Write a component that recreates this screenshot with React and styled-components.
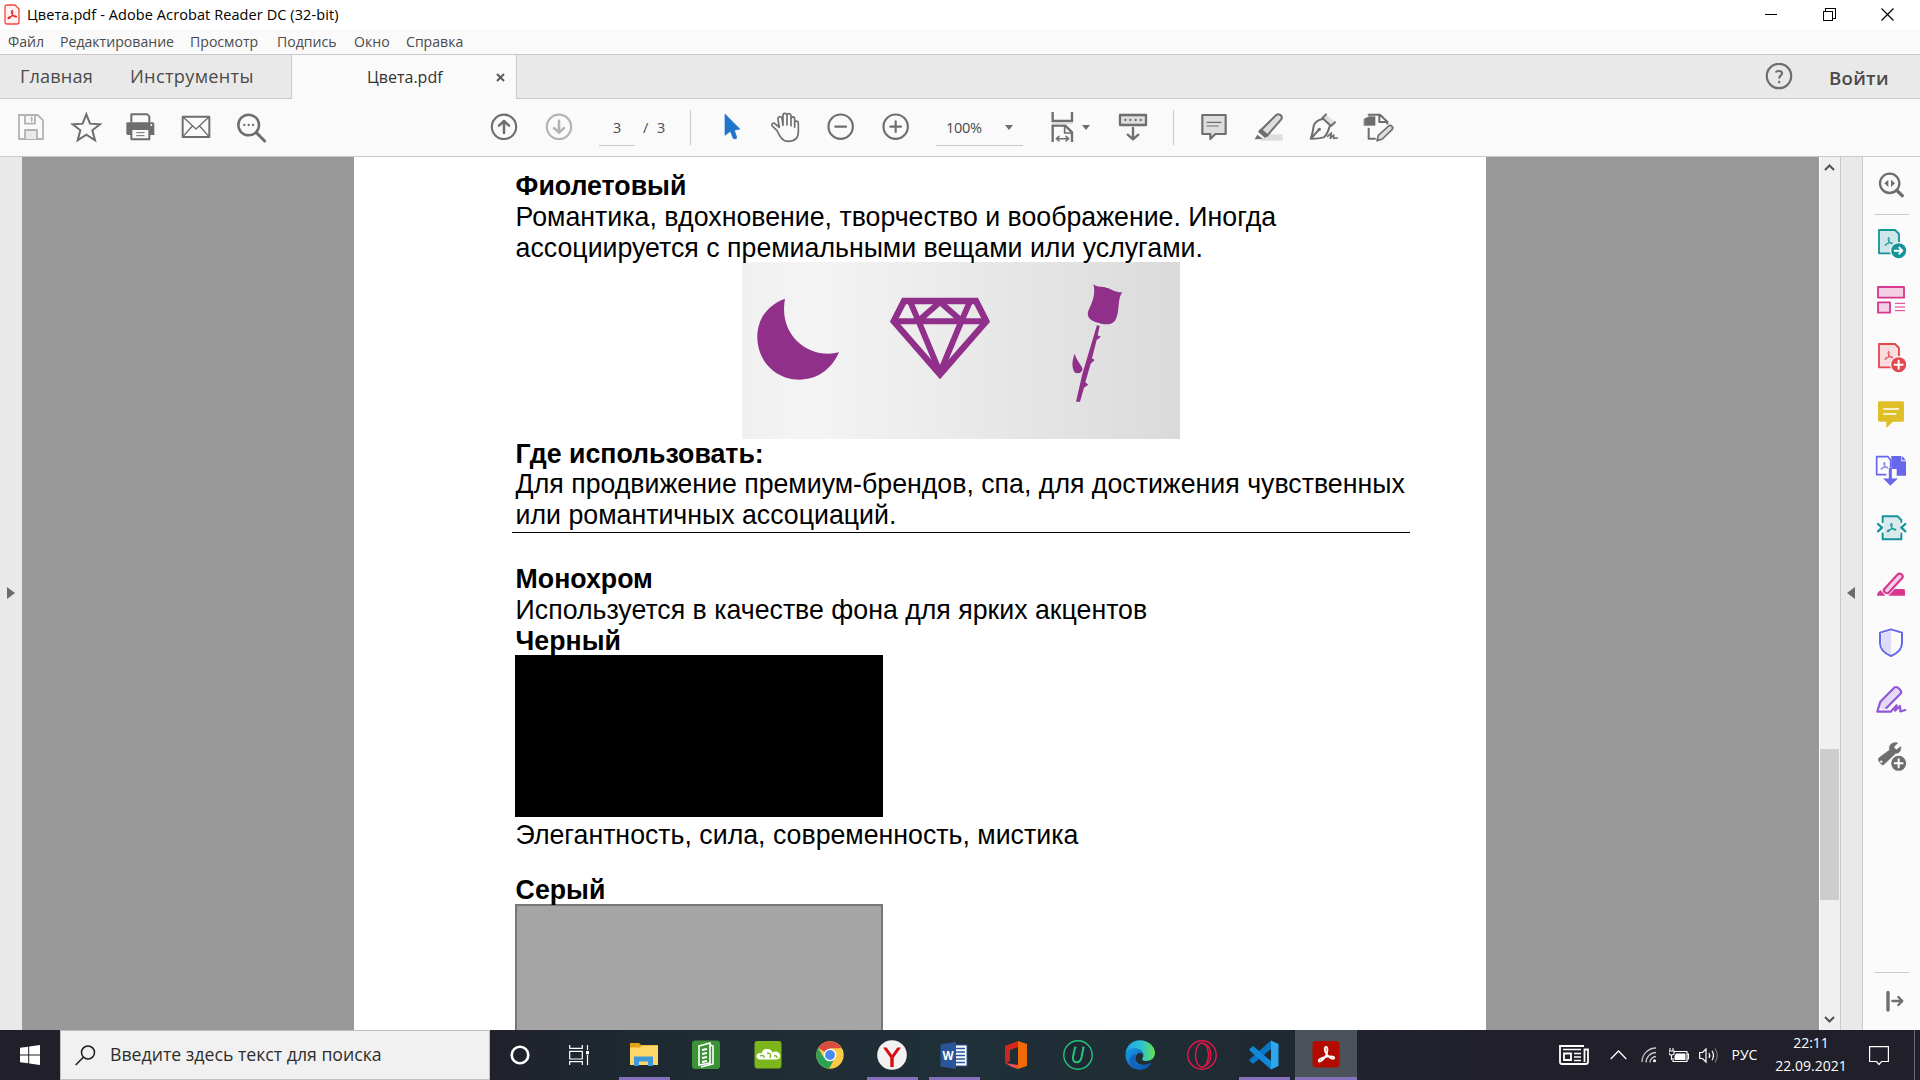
import React from "react";
import styled, { createGlobalStyle } from "styled-components";

const GlobalStyle = createGlobalStyle`
  * { box-sizing: border-box; }
  html, body { margin: 0; padding: 0; overflow: hidden; }
  body { font-family: "Open Sans", "Noto Sans", sans-serif; color: #4b4b4b; }
  svg { display: block; flex: none; }
`;

const Screen = styled.div`
  width: 1920px;
  height: 1080px;
  display: flex;
  flex-direction: column;
  background: #fafafa;
  overflow: hidden;
`;

const Label = styled.span`
  font-size: ${(p) => p.$size || 14}px;
  letter-spacing: ${(p) => p.$track || 0}px;
  font-weight: ${(p) => p.$weight || 400};
  color: ${(p) => p.$color || "#4b4b4b"};
  line-height: 1.2;
  white-space: nowrap;
`;

/* ---------- window frame ---------- */

const TitleBar = styled.header`
  height: 29px;
  flex: none;
  display: flex;
  align-items: center;
  background: #fff;
  padding: 0 4px;
`;

const TitleText = styled(Label)`
  margin-left: 7px;
  flex: 1;
`;

const WindowButton = styled.div`
  width: 58px;
  height: 29px;
  display: flex;
  align-items: center;
  justify-content: center;
`;

const MenuBar = styled.nav`
  height: 26px;
  flex: none;
  display: flex;
  align-items: center;
  padding: 1px 0 0 8px;
  background: #fafafa;
  border-bottom: 1px solid #c9c9c9;
`;

const MenuItem = styled(Label)`
  width: ${(p) => p.$w}px;
  font-size: 14.1px;
`;

const TabBar = styled.div`
  height: 44px;
  flex: none;
  display: flex;
  background: #e9e9e9;
`;

const TabArea = styled.div`
  display: flex;
  align-items: center;
  border-bottom: 1px solid #c9c9c9;
  padding-left: ${(p) => p.$pad || 0}px;
  width: ${(p) => (p.$w ? p.$w + "px" : "auto")};
  flex: ${(p) => (p.$w ? "none" : 1)};
  justify-content: ${(p) => (p.$end ? "flex-end" : "flex-start")};
`;

const NavTab = styled(Label)`
  width: ${(p) => p.$w}px;
`;

const ActiveTab = styled.div`
  width: 226px;
  display: flex;
  align-items: center;
  background: #fafafa;
  border-left: 1px solid #c9c9c9;
  border-right: 1px solid #c9c9c9;
  padding: 1px 0 0 75px;
`;

const TabName = styled(Label)`
  width: 129px;
`;

const SignIn = styled(Label)`
  width: 91px;
  margin-left: 36px;
  padding-top: 3px;
`;

/* ---------- toolbar ---------- */

const Toolbar = styled.div`
  height: 58px;
  flex: none;
  display: flex;
  align-items: center;
  background: #fafafa;
  border-bottom: 1px solid #c9c9c9;
  padding-left: 4px;
`;

const ToolGroup = styled.div`
  display: flex;
  margin-left: ${(p) => p.$gap || 0}px;
`;

const Tool = styled.div`
  width: 55px;
  display: flex;
  justify-content: center;
`;

const Field = styled.div`
  width: ${(p) => p.$w}px;
  height: 36px;
  margin-left: 12px;
  border-bottom: 1px solid #c9c9c9;
  display: flex;
  align-items: center;
  justify-content: space-between;
  padding: 1px ${(p) => p.$px}px 0;
`;

const PageTotal = styled(Label)`
  width: 55px;
  padding: 1px 0 0 8px;
  word-spacing: 5px;
`;

const ToolDivider = styled.div`
  width: 1px;
  height: 35px;
  background: #c9c9c9;
  margin-left: ${(p) => p.$gap || 0}px;
`;

const Caret = styled.div`
  border-left: 4px solid transparent;
  border-right: 4px solid transparent;
  border-top: 5px solid #6e6e6e;
  margin-left: ${(p) => p.$gap || 0}px;
`;

/* ---------- work area ---------- */

const WorkArea = styled.main`
  height: 873px;
  flex: none;
  display: flex;
`;

const SideHandle = styled.div`
  width: 22px;
  display: flex;
  align-items: center;
  padding: 0 0 2px ${(p) => p.$pad}px;
  background: #e9e9e9;
  border-left: ${(p) => (p.$edge ? "1px solid #c9c9c9" : "none")};
`;

const Arrow = styled.div`
  border-top: 6px solid transparent;
  border-bottom: 6px solid transparent;
  border-left: ${(p) => (p.$left ? "none" : "8px solid #6b6b6b")};
  border-right: ${(p) => (p.$left ? "8px solid #6b6b6b" : "none")};
`;

const Canvas = styled.section`
  width: 1797px;
  height: 873px;
  background: #999;
  padding-left: 332px;
  overflow: hidden;
`;

const Page = styled.article`
  width: 1132px;
  height: 873px;
  overflow: hidden;
  background: #fff;
  padding: 14.3px 0 0 161px;
  font-family: "Liberation Sans", Arial, sans-serif;
  font-size: 26.72px;
  line-height: 30.7px;
  color: #000;
`;

const Heading = styled.h2`
  font-size: inherit;
  font-weight: 700;
  margin: 0;
  padding-left: 0.6px;
  white-space: nowrap;
`;

const Paragraph = styled.p`
  margin: 0;
  padding: ${(p) => p.$before || 0}px 0 ${(p) => p.$after || 0}px 0.6px;
  white-space: nowrap;
`;

const Figure = styled.figure`
  width: 438px;
  height: 177px;
  margin: -1.3px 0 -0.4px 227px;
  background: linear-gradient(90deg, #f0f0f0 0%, #f4f4f4 15%, #ededed 40%, #e2e2e2 75%, #dadada 100%);
`;

const Rule = styled.hr`
  width: 898px;
  height: 1px;
  border: 0;
  background: #000;
  margin: 1.4px 0 31px -3px;
`;

const Swatch = styled.div`
  width: 368px;
  height: ${(p) => p.$h}px;
  margin-top: -${(p) => p.$lift}px;
  background: ${(p) => p.$fill};
  border: 2px solid ${(p) => p.$line};
`;

const ScrollBar = styled.div`
  width: 21px;
  display: flex;
  flex-direction: column;
  align-items: center;
  background: #f0f0f0;
  border-left: 1px solid #fff;
  padding: 6px 1px 5px 0;
`;

const ScrollThumb = styled.div`
  width: 19px;
  height: 151px;
  margin: 577px 0 115px;
  flex: none;
  background: #cdcdcd;
`;

const ToolPane = styled.aside`
  width: 58px;
  display: flex;
  flex-direction: column;
  align-items: center;
  background: #fbfbfb;
  border-left: 1px solid #c9c9c9;
`;

const PaneSlot = styled.div`
  height: 57px;
  display: flex;
  align-items: center;
`;

const PaneDivider = styled.div`
  width: 35px;
  height: 1px;
  background: #c9c9c9;
  margin-top: ${(p) => p.$gap || 0}px;
`;

/* ---------- taskbar ---------- */

const Taskbar = styled.footer`
  height: 50px;
  flex: none;
  display: flex;
  background: linear-gradient(90deg, #211f29 0%, #20202a 24%, #1e2a32 34%, #203038 50%, #1f2c34 62%, #20232d 72%, #211f29 80%);
`;

const StartButton = styled.div`
  width: 60px;
  display: flex;
  align-items: center;
  justify-content: center;
`;

const SearchBox = styled.div`
  width: 430px;
  height: 50px;
  display: flex;
  align-items: center;
  background: #f1f1f1;
  border: 1px solid #bfbfbf;
  padding-left: 14px;
`;

const SearchHint = styled(Label)`
  margin-left: 14px;
`;

const SystemButtons = styled.div`
  display: flex;
  margin-right: 4px;
`;

const SystemButton = styled.div`
  width: 59.5px;
  display: flex;
  align-items: center;
  justify-content: center;
`;

const AppButton = styled.div`
  width: 62px;
  height: 50px;
  display: flex;
  flex-direction: column;
  align-items: center;
  justify-content: space-between;
  padding-top: 9px;
  background: ${(p) => (p.$active ? "#4b5259" : "transparent")};
`;

const RunningMark = styled.div`
  width: ${(p) => (p.$full ? "100%" : "51px")};
  height: 3px;
  background: #8570bb;
`;

const Tray = styled.div`
  flex: 1;
  display: flex;
  align-items: center;
  justify-content: flex-end;
`;

const TrayItem = styled.div`
  width: ${(p) => p.$w}px;
  display: flex;
  justify-content: center;
`;

const Clock = styled.div`
  width: 92px;
  height: 50px;
  display: flex;
  flex-direction: column;
  align-items: center;
  justify-content: center;
  gap: 6px;
`;

const ShowDesktop = styled.div`
  width: 6px;
  height: 50px;
  border-left: 1px solid #6b6a72;
  margin-left: 13px;
`;

/* Glyphs are drawn on a grid of three units to the pixel. */
const Glyph = ({ x, y, children }) => (
  <svg width="33" height="33" viewBox={`${x} ${y} 99 99`} fill="none" strokeLinecap="round" strokeLinejoin="round">
    {children}
  </svg>
);

const G = "#6e6e6e";

const PdfMark = ({ x, y, color, s = 1 }) => (
  <path
    transform={`translate(${x} ${y}) scale(${s})`}
    d="M0 -15C4 -15 3 -5 0 1C-4 8 -10 13 -13 12C-16 9 -6 4 2 3C10 2 16 3 15 6C13 9 4 4 0 -3C-3 -9 -3 -15 0 -15Z"
    stroke={color}
    strokeWidth={3.4}
    fill="none"
  />
);

const FileTools = () => (
  <ToolGroup>
    <Tool>
      <Glyph x={0} y={0}>
        <g stroke="#b3b3b3" strokeWidth="5.500">
          <path d="M12 12H68L84 28V84H12Z" />
          <path d="M30 12V38H60V12M50 19V30" />
          <path d="M30 84V57H66V84" fill="#e9e9e9" />
        </g>
      </Glyph>
    </Tool>
    <Tool>
      <Glyph x={0} y={0}>
        <path d="M49 10L60 38L90 40L67 58L75 88L49 71L23 88L31 58L8 40L38 38Z" stroke={G} strokeWidth="6" strokeLinejoin="miter" />
      </Glyph>
    </Tool>
    <Tool>
      <Glyph x={3} y={0}>
        <path d="M22 32V10H70L76 16V32" stroke={G} strokeWidth="6" />
        <path d="M9 34H86Q91 34 91 40V72H76V52H22V72H11Q7 72 7 66V40Q7 34 9 34Z" fill={G} />
        <path d="M22 54H76V85H22Z" stroke={G} strokeWidth="6" fill="#fafafa" />
        <path d="M38 65H60M38 74H60" stroke={G} strokeWidth="3" />
        <circle cx="82" cy="42" r="3" fill="#fafafa" />
      </Glyph>
    </Tool>
    <Tool>
      <Glyph x={0} y={0}>
        <path d="M8 17H88V78H8Z" stroke={G} strokeWidth="6" />
        <path d="M9 18L48 54L87 18M9 77L37 45M87 77L59 45" stroke={G} strokeWidth="4" />
      </Glyph>
    </Tool>
    <Tool>
      <Glyph x={0} y={0}>
        <circle cx="41" cy="42" r="31" stroke={G} strokeWidth="7.500" />
        <path d="M64 65L89 90" stroke={G} strokeWidth="9" />
        <path d="M28 42H28.1M41 42H41.1M54 42H54.1" stroke={G} strokeWidth="7" />
      </Glyph>
    </Tool>
  </ToolGroup>
);

const PageTools = () => (
  <>
    <ToolGroup $gap={198}>
      <Tool>
        <Glyph x={84} y={63}>
          <circle cx="132" cy="110.500" r="36.500" stroke={G} strokeWidth="6.500" />
          <path d="M132 129V93M117 107L132 93L147 107" stroke={G} strokeWidth="7.500" />
        </Glyph>
      </Tool>
      <Tool>
        <Glyph x={249} y={63}>
          <circle cx="297" cy="110.500" r="36.500" stroke="#b3b3b3" strokeWidth="6.500" />
          <path d="M297 92V128M282 114L297 128L312 114" stroke="#b3b3b3" strokeWidth="7.500" />
        </Glyph>
      </Tool>
    </ToolGroup>
    <Field $w={36} $px={14}>
      <Label $size={14.5}>3</Label>
    </Field>
    <PageTotal $size={14.5}>/ 3</PageTotal>
    <ToolDivider />
  </>
);

const ViewTools = () => (
  <>
    <ToolGroup $gap={13}>
      <Tool>
        <Glyph x={765} y={63}>
          <path d="M795 73V136L811 124L820 146H829L830 141L823 121L839 117Z" fill="#2074ca" stroke="#2074ca" strokeWidth="2" />
        </Glyph>
      </Tool>
      <Tool>
        <Glyph x={933} y={63}>
          <path
            d="M954 122L940 108C935 100 944 97 949 102L961 112L957 88C956 79 967 77 969 86L972 106V76C972 68 983 68 984 76V105V76C985 68 996 70 996 77V107V86C997 78 1007 79 1007 87V112V98C1008 91 1018 92 1018 99V126C1018 145 1005 154 987 154C970 154 963 140 954 122Z"
            stroke={G}
            strokeWidth="5"
          />
        </Glyph>
      </Tool>
      <Tool>
        <Glyph x={1095} y={63}>
          <circle cx="1142" cy="110" r="36.500" stroke={G} strokeWidth="6.500" />
          <path d="M1126 110H1158" stroke={G} strokeWidth="6.500" />
        </Glyph>
      </Tool>
      <Tool>
        <Glyph x={1260} y={63}>
          <circle cx="1307" cy="110" r="36.500" stroke={G} strokeWidth="6.500" />
          <path d="M1291 110H1323M1307 94V126" stroke={G} strokeWidth="6.500" />
        </Glyph>
      </Tool>
    </ToolGroup>
    <Field $w={87} $px={10}>
      <Label $size={14.5} $track={-0.3}>100%</Label>
      <Caret />
    </Field>
    <ToolGroup $gap={24}>
      <Glyph x={381} y={63}>
        <g stroke={G} strokeWidth="7" strokeLinecap="butt" strokeLinejoin="miter">
          <path d="M398 66V93H456V66" />
          <path d="M398 156V107H436L456 127V156" />
          <path d="M434 107V129H456" strokeWidth="5" />
        </g>
        <path d="M400 100H456" stroke="#dedede" strokeWidth="5" />
        <path d="M411 146H443M417 139L409 146L417 153M438 139L446 146L438 153" stroke={G} strokeWidth="4.500" />
      </Glyph>
    </ToolGroup>
    <Caret $gap={2} />
    <ToolGroup $gap={27}>
      <Glyph x={591} y={63}>
        <path d="M600 75H678V105H600Z" stroke={G} strokeWidth="7" fill="#dedede" />
        <path d="M616 90H616.1M631 90H631.1M647 90H647.1M662 90H662.1" stroke={G} strokeWidth="7" />
        <path d="M639 114V148M623 134L639 148L655 134" stroke={G} strokeWidth="7" />
      </Glyph>
    </ToolGroup>
    <ToolDivider $gap={23} />
  </>
);

const MarkupTools = () => (
  <ToolGroup $gap={13}>
    <Tool>
      <Glyph x={834} y={63}>
        <path d="M847 75H917V132H886L871 147V132H847Z" stroke={G} strokeWidth="6.500" fill="#dedede" />
        <path d="M861 97H903M861 108H895" stroke={G} strokeWidth="3.500" />
      </Glyph>
    </Tool>
    <Tool>
      <Glyph x={999} y={63}>
        <path d="M1042 133H1088V152H1020Z" fill="#dedede" />
        <path d="M1024 119L1068 76C1076 68 1091 78 1083 89L1042 136Z" stroke={G} strokeWidth="6" fill="#dedede" />
        <path d="M1020 116L1046 138L1034 143L1014 125ZM1012 134L1029 147L1004 148Z" fill={G} />
      </Glyph>
    </Tool>
    <Tool>
      <Glyph x={1164} y={63}>
        <path d="M1219 74L1244 95L1231 107L1209 84Z" fill="#dedede" />
        <path
          d="M1218 73L1207 84L1233 108L1245 97M1207 87C1192 91 1184 96 1181 108C1179 122 1177 135 1172 146C1188 146 1202 145 1211 142C1221 136 1224 124 1229 109M1173 146L1196 120"
          stroke={G}
          strokeWidth="6"
        />
        <circle cx="1198" cy="118" r="5" fill={G} />
        <path d="M1223 139L1234 129L1231 145L1241 135L1241 145L1252 144" stroke={G} strokeWidth="5" />
      </Glyph>
    </Tool>
    <Tool>
      <Glyph x={1329} y={63}>
        <path d="M1346 74H1380L1402 95V101M1378 75V96H1400M1346 116V146H1365" stroke={G} strokeWidth="6" />
        <path d="M1333 87L1347 80H1365V106H1333Z" fill={G} stroke={G} strokeWidth="2" />
        <path d="M1371 152L1375 136L1406 108C1413 103 1422 112 1416 119L1387 147Z" fill="#dedede" stroke={G} strokeWidth="5" />
      </Glyph>
    </Tool>
  </ToolGroup>
);

const PaneDoc = ({ y, color, tint, children }) => (
  <Glyph x={225} y={y}>
    <g transform={`translate(0 ${y - 231})`}>
      <path d="M237 240H285L297 252V310H237Z" fill={tint} stroke={color} strokeWidth="5.500" />
      <PdfMark x={266} y={276} color={color} s={0.85} />
      <circle cx="296" cy="302" r="26" fill="#fbfbfb" />
      <circle cx="296" cy="302" r="22.500" fill={color} />
      {children}
    </g>
  </Glyph>
);

const paneIcons = [
  <PaneDoc y={231} color="#17949b" tint="#cfe6e8">
    <path d="M284 302H305M298 293L307 302L298 311" stroke="#fff" strokeWidth="6" />
  </PaneDoc>,
  <Glyph x={225} y={402}>
    <g stroke="#d83790" strokeWidth="5.500" fill="#f4d0e4">
      <path d="M234 411H312V443H234Z" />
      <path d="M234 457H270V488H234Z" />
      <path d="M286 460H314M286 471H314M286 482H314" strokeWidth="3" />
    </g>
  </Glyph>,
  <PaneDoc y={573} color="#e34850" tint="#f9dcde">
    <path d="M284 302H308M296 290V314" stroke="#fff" strokeWidth="6" />
  </PaneDoc>,
  <Glyph x={225} y={744}>
    <path d="M238 754H308Q312 754 312 758V811Q312 815 308 815H279L259 834V815H238Q234 815 234 811V758Q234 754 238 754Z" fill="#dfbf28" />
    <path d="M251 777H295M251 792H287" stroke="#fff" strokeWidth="5" />
  </Glyph>,
  <Glyph x={225} y={915}>
    <path d="M274 918H304V934H318V977H290V957H274Z" fill="#6767ec" />
    <path d="M306 918L318 931H306Z" fill="#6767ec" />
    <path d="M257 974H230V920H264L272 930V951" stroke="#6767ec" strokeWidth="5" />
    <PdfMark x={253} y={949} color="#6767ec" s={0.75} />
    <path d="M271 957V990" stroke="#6767ec" strokeWidth="9" />
    <path d="M252 987L271 1006L291 987Z" fill="#6767ec" stroke="#6767ec" strokeWidth="2" />
  </Glyph>,
  <Glyph x={225} y={1086}>
    <path d="M248 1117V1099H293L304 1110V1117M304 1150V1168H248V1150" fill="#d8eaeb" stroke="#17949b" strokeWidth="6" />
    <path d="M251 1115H302V1153H251Z" fill="#d8eaeb" />
    <PdfMark x={274} y={1134} color="#17949b" s={0.9} />
    <path d="M234 1122L246 1133L234 1144M316 1122L304 1133L316 1144" stroke="#17949b" strokeWidth="7" />
  </Glyph>,
  <Glyph x={225} y={57}>
    <path d="M265 137L284 117H311Q315 117 315 122V137Z" fill="#d83790" />
    <path d="M251 119L292 74C300 66 313 75 306 85L265 129C259 132 250 125 251 119Z" fill="#f4d0e4" stroke="#d83790" strokeWidth="6.500" />
    <path d="M231 137Q231 127 242 121L256 137Z" fill="#d83790" />
  </Glyph>,
  <Glyph x={225} y={228}>
    <path d="M273 238L306 248V279C306 298 292 310 273 318C254 310 240 298 240 279V248Z" stroke="#6767ec" strokeWidth="6" />
    <path d="M273 243V312C256 305 244 296 244 279V252Z" fill="#dcdcfa" />
  </Glyph>,
  <Glyph x={225} y={399}>
    <path d="M238 460L282 414C290 406 308 417 303 428L265 473L251 480L238 471Z" fill="#e5daf6" />
    <path d="M259 474L303 430C307 424 293 407 284 412L241 455L232 485H272L290 466L285 482L300 468L301 484L316 480" stroke="#9256d9" strokeWidth="6.500" />
  </Glyph>,
  <Glyph x={225} y={570}>
    <path d="M240 637C234 632 234 625 239 622L269 600C265 585 277 575 293 579L281 591L289 600L302 590C304 603 297 610 287 610L254 641C249 647 244 645 240 637Z" fill={G} stroke={G} strokeWidth="2" />
    <circle cx="244" cy="635" r="3.500" fill="#fbfbfb" />
    <circle cx="296" cy="640" r="26" fill="#fbfbfb" />
    <circle cx="296" cy="640" r="22.500" fill={G} />
    <path d="M284 640H308M296 628V652" stroke="#fff" strokeWidth="6" />
  </Glyph>,
];

const Illustration = () => (
  <svg width="438" height="177" viewBox="36 36 1314 531" fill="#90308a">
    <path d="M165 146C112 165 82 207 82 262C82 333 138 389 207 389C262 389 305 358 327 307C239 329 144 258 165 146Z" />
    <g fill="none" stroke="#90308a" strokeWidth="19">
      <path d="M522 153H738L769 214L630 373L491 214Z" />
      <path d="M490 214H770M540 154L566 214L630 368L694 214L720 154M566 212L630 156L694 212" strokeWidth="18" strokeLinejoin="bevel" />
    </g>
    <path d="M1090 103C1105 114 1115 108 1128 113C1141 114 1148 126 1177 127C1162 145 1169 183 1159 204C1151 227 1127 225 1104 218C1082 214 1068 199 1075 182C1087 159 1098 130 1090 103Z" />
    <path d="M1101 225L1109 228L1103 256L1113 260L1100 270L1086 325L1094 330L1082 341L1066 397L1075 404L1062 413L1050 455H1038L1057 372Z" />
    <path d="M1034 311C1027 330 1024 348 1033 366C1042 374 1056 369 1058 357C1053 342 1040 333 1034 311Z" />
  </svg>
);

const Icon32 = ({ children }) => (
  <svg width="32" height="32" viewBox="0 0 32 32" fill="none">
    {children}
  </svg>
);

const apps = [
  {
    running: true,
    icon: (
      <Icon32>
        <path d="M2 4H11L13 6H30V26H2Z" fill="#e3a316" />
        <path d="M2 8.500H12L14 6.500H30V26H2Z" fill="#fdd568" />
        <path d="M6 17.500H25V27H20V22.500H11V27H6Z" fill="#3e99dc" />
      </Icon32>
    ),
  },
  {
    icon: (
      <Icon32>
        <rect x="2" y="1.500" width="28" height="28.500" rx="3" fill="#3c9235" />
        <path d="M9 7L20 4V24L9 26ZM20 6L23 7V25L11 28" stroke="#fff" strokeWidth="1.600" />
        <path d="M12 11L17 10M12 15L17 14M12 19L17 18M12 23L17 22" stroke="#fff" strokeWidth="2" />
      </Icon32>
    ),
  },
  {
    icon: (
      <Icon32>
        <rect x="2.500" y="2" width="27" height="27.500" rx="3" fill="#7db61c" />
        <path d="M8 20.500Q4 20 4.500 16.500Q6 13 9.500 14.500Q10.500 9.500 15 10Q19 9.500 20.500 13.500Q26 11 28 15.500Q29 20.500 24 20.500Z" fill="#fff" />
        <path d="M8 17Q12 15 12 19M15 14Q20 14 18 19M22 17Q25 16 25 19" stroke="#7db61c" strokeWidth="1.400" />
      </Icon32>
    ),
  },
  {
    icon: (
      <Icon32>
        <circle cx="16" cy="16" r="13.700" fill="#fccb45" />
        <path d="M16 16L4.200 9.100A13.700 13.700 0 0 1 27.900 9.200H16Z" fill="#d94d40" />
        <path d="M4.200 9.100A13.700 13.700 0 0 0 15 29.700L21 19L16 16L10 19Z" fill="#2ca257" />
        <circle cx="16" cy="16" r="6.300" fill="#fff" />
        <circle cx="16" cy="16" r="5" fill="#4a8af4" />
      </Icon32>
    ),
  },
  {
    running: true,
    icon: (
      <Icon32>
        <circle cx="16" cy="16" r="14.800" fill="#f2f2f2" />
        <path d="M7 8.500H10.700L16 16L21.300 8.500H25L17.700 18.700V28H14.300V18.700Z" fill="#d90d12" />
      </Icon32>
    ),
  },
  {
    running: true,
    icon: (
      <Icon32>
        <path d="M14 6H29V27H14Z" fill="#fff" stroke="#2b579a" />
        <path d="M18 9.500H27M18 13H27M18 16.500H27M18 20H27M18 23.500H27" stroke="#2b579a" strokeWidth="1.600" />
        <path d="M2.500 5.500L18 3V30L2.500 27.500Z" fill="#2a5699" />
        <text x="10" y="20.500" fontFamily="Open Sans, sans-serif" fontSize="11.500" fontWeight="700" textAnchor="middle" fill="#fff">W</text>
      </Icon32>
    ),
  },
  {
    icon: (
      <Icon32>
        <path d="M18 2L5 7V24L10 22V11L18 8Z" fill="#d5281a" />
        <path d="M18 2L27 5V27L18 30Z" fill="#f06a08" />
        <path d="M5 24L18 26V30L12 28Z" fill="#f05050" />
        <path d="M5 9V24L10 22V11Z" fill="#c42a22" />
      </Icon32>
    ),
  },
  {
    icon: (
      <Icon32>
        <circle cx="16" cy="16" r="14.200" fill="#202735" stroke="#1fc777" strokeWidth="1.400" />
        <path d="M13 8.500L11 18C10 25 18 25 19.500 18.500L21.500 8.500" stroke="#1fc777" strokeWidth="2" />
        <path d="M12 8.500H14.500M20 8.500H22.500" stroke="#1fc777" strokeWidth="1.300" />
      </Icon32>
    ),
  },
  {
    icon: (
      <Icon32>
        <defs>
          <linearGradient id="edgeTop" x1="3" y1="12" x2="30" y2="12" gradientUnits="userSpaceOnUse">
            <stop offset="0" stopColor="#25a5e2" />
            <stop offset=".5" stopColor="#2cc0d8" />
            <stop offset="1" stopColor="#62e057" />
          </linearGradient>
          <linearGradient id="edgeBody" x1="5" y1="12" x2="20" y2="30" gradientUnits="userSpaceOnUse">
            <stop offset="0" stopColor="#1592df" />
            <stop offset="1" stopColor="#0c5cae" />
          </linearGradient>
        </defs>
        <path d="M1.500 15C2 7 8 1.300 16 1.300C25 1.300 31 8 31 14C31 19 27 22 22 22C19 22 17.500 21 18.500 19.500C20 17 20 12 14 10C8 9 3 11 1.500 15Z" fill="url(#edgeTop)" />
        <path d="M1.500 15C3 10 8 8.500 12.500 9.500C17 10.500 19.500 13 19.700 16C16 11.500 11 15 11.500 20C12 25 19 28 27.500 23.500C25 28.500 21 30.700 16 30.700C7 30.700 1 23.500 1.500 15Z" fill="url(#edgeBody)" />
        <path d="M12 15C9 21 13 29 20 30C11 32 5 26 6 20C6.500 17 9 15 12 15Z" fill="#1464bd" />
      </Icon32>
    ),
  },
  {
    icon: (
      <Icon32>
        <circle cx="16" cy="16" r="14.200" stroke="#e1194c" strokeWidth="1.400" />
        <ellipse cx="16" cy="16" rx="6.500" ry="12" stroke="#e1194c" strokeWidth="1.400" />
        <path d="M18 4.500C27 8 27 24 18 27.500" stroke="#e1194c" strokeWidth="1.400" />
      </Icon32>
    ),
  },
  {
    running: true,
    icon: (
      <Icon32>
        <path d="M23 1.500L30.500 5V27L23 30.500Z" fill="#2ea5ef" />
        <path d="M23 1.500V10L5 25L1.500 22V20.500Z" fill="#0877c5" />
        <path d="M23 30.500V22L5 7L1.500 10V11.500Z" fill="#1188d8" />
      </Icon32>
    ),
  },
  {
    running: true,
    active: true,
    icon: (
      <Icon32>
        <rect x="2.500" y="2" width="27" height="26.500" rx="3.500" fill="#b30b00" />
        <PdfMark x={16} y={16} color="#fff" s={0.54} />
      </Icon32>
    ),
  },
];

const W = "#fff";

export default function App() {
  return (
    <Screen>
      <GlobalStyle />
      <TitleBar>
        <svg width="16" height="21" viewBox="0 0 16 21" fill="none">
          <path d="M3 1H11L15 5V18Q15 20 13 20H3Q1 20 1 18V3Q1 1 3 1Z" stroke="#f5453b" strokeWidth="1.300" fill="#fff3f2" />
          <PdfMark x={8} y={11} color="#e5231b" s={0.3} />
        </svg>
        <TitleText $size={14.5} $track={0.09} $color="#000">Цвета.pdf - Adobe Acrobat Reader DC (32-bit)</TitleText>
        <WindowButton>
          <svg width="12" height="12" shapeRendering="crispEdges"><path d="M0 5.500H12" stroke="#000" /></svg>
        </WindowButton>
        <WindowButton>
          <svg width="13" height="13" fill="none" stroke="#000" shapeRendering="crispEdges">
            <path d="M.5 3.500H9.500V12.500H.5ZM2.500 3V.5H12.500V10.500H10" />
          </svg>
        </WindowButton>
        <WindowButton>
          <svg width="13" height="13" stroke="#000" strokeWidth="1.200"><path d="M.5 .5L12.500 12.500M12.500 .5L.5 12.500" /></svg>
        </WindowButton>
      </TitleBar>

      <MenuBar>
        <MenuItem $w={52}>Файл</MenuItem>
        <MenuItem $w={130}>Редактирование</MenuItem>
        <MenuItem $w={87}>Просмотр</MenuItem>
        <MenuItem $w={77}>Подпись</MenuItem>
        <MenuItem $w={52}>Окно</MenuItem>
        <MenuItem $w={80}>Справка</MenuItem>
      </MenuBar>

      <TabBar>
        <TabArea $w={291} $pad={20}>
          <NavTab $w={110} $size={18.2} $track={0.1}>Главная</NavTab>
          <NavTab $w={140} $size={18.2} $track={0.3}>Инструменты</NavTab>
        </TabArea>
        <ActiveTab>
          <TabName $size={16} $color="#323232">Цвета.pdf</TabName>
          <svg width="9" height="9" stroke="#5a5a5a" strokeWidth="2"><path d="M1 1L8 8M8 1L1 8" /></svg>
        </ActiveTab>
        <TabArea $end>
          <svg width="28" height="28" viewBox="0 0 28 28" fill="none" stroke={G}>
            <circle cx="14" cy="13" r="12.200" strokeWidth="2.200" />
            <path d="M10.800 9.500C11.500 7.500 17 7.200 17 10.300C17 12.500 14.200 12.700 14.200 15.500" strokeWidth="2.200" />
            <circle cx="14.200" cy="19" r=".9" strokeWidth="1" fill={G} />
          </svg>
          <SignIn $size={18.6} $weight={600} $track={0.3}>Войти</SignIn>
        </TabArea>
      </TabBar>

      <Toolbar>
        <FileTools />
        <PageTools />
        <ViewTools />
        <MarkupTools />
      </Toolbar>

      <WorkArea>
        <SideHandle $pad={7}><Arrow /></SideHandle>
        <Canvas>
          <Page>
            <Heading>Фиолетовый</Heading>
            <Paragraph>
              Романтика, вдохновение, творчество и воображение. Иногда
              <br />
              ассоциируется с премиальными вещами или услугами.
            </Paragraph>
            <Figure><Illustration /></Figure>
            <Heading>Где использовать:</Heading>
            <Paragraph>
              Для продвижение премиум-брендов, спа, для достижения чувственных
              <br />
              или романтичных ассоциаций.
            </Paragraph>
            <Rule />
            <Heading>Монохром</Heading>
            <Paragraph>Используется в качестве фона для ярких акцентов</Paragraph>
            <Heading>Черный</Heading>
            <Swatch $h={162} $lift={1} $fill="#000" $line="#000" />
            <Paragraph $before={3} $after={24.4}>Элегантность, сила, современность, мистика</Paragraph>
            <Heading>Серый</Heading>
            <Swatch $h={160} $lift={1.9} $fill="#a5a5a5" $line="#777" />
          </Page>
        </Canvas>
        <ScrollBar>
          <svg width="11" height="9" fill="none" stroke="#505050" strokeWidth="2"><path d="M1 7L5.500 2.500L10 7" /></svg>
          <ScrollThumb />
          <svg width="11" height="9" fill="none" stroke="#505050" strokeWidth="2"><path d="M1 2L5.500 6.500L10 2" /></svg>
        </ScrollBar>
        <SideHandle $pad={6} $edge><Arrow $left /></SideHandle>
        <ToolPane>
          <PaneSlot>
            <Glyph x={225} y={57}>
              <circle cx="269" cy="100" r="29" stroke={G} strokeWidth="7" />
              <path d="M290 121L307 137" stroke={G} strokeWidth="10" />
              <path d="M265 89V111L253 100ZM273 89V111L285 100Z" fill={G} />
            </Glyph>
          </PaneSlot>
          <PaneDivider />
          {paneIcons.map((icon, i) => (
            <PaneSlot key={i}>{icon}</PaneSlot>
          ))}
          <PaneDivider $gap={187} />
          <PaneSlot>
            <Glyph x={225} y={1305}>
              <path d="M264 1327V1380" stroke={G} strokeWidth="10" />
              <path d="M277 1353H305M295 1341L307 1353L295 1365" stroke={G} strokeWidth="7" />
            </Glyph>
          </PaneSlot>
        </ToolPane>
      </WorkArea>

      <Taskbar>
        <StartButton>
          <svg width="20" height="20" viewBox="0 0 20 20" fill={W}>
            <path d="M0 2.800L8.200 1.700V9.500H0ZM9.200 1.500L20 0V9.500H9.200ZM0 10.500H8.200V18.300L0 17.200ZM9.200 10.500H20V20L9.200 18.500Z" />
          </svg>
        </StartButton>
        <SearchBox>
          <svg width="21" height="21" fill="none" stroke="#1c1c1c" strokeWidth="1.500">
            <circle cx="13" cy="7.500" r="6.500" />
            <path d="M8.300 12.200L.7 20" />
          </svg>
          <SearchHint $size={17.7} $color="#2d2d2d">Введите здесь текст для поиска</SearchHint>
        </SearchBox>
        <SystemButtons>
          <SystemButton>
            <svg width="20" height="20"><circle cx="10" cy="10" r="8.300" fill="none" stroke={W} strokeWidth="2.600" /></svg>
          </SystemButton>
          <SystemButton>
            <svg width="21" height="20" fill="none" stroke={W} strokeWidth="1.200">
              <path d="M.7 0V3.300H13.300V0M.7 6.300H13.300V14H.7ZM.7 20V16.700H13.300V20M18.500 0V5M18.500 10V20" />
              <path d="M17 6H20V9.300H17Z" fill={W} stroke="none" />
            </svg>
          </SystemButton>
        </SystemButtons>
        {apps.map((app, i) => (
          <AppButton key={i} $active={app.active}>
            {app.icon}
            {app.running && <RunningMark $full={app.active} />}
          </AppButton>
        ))}
        <Tray>
          <TrayItem $w={56}>
            <svg width="30" height="20" fill="none" stroke={W} strokeWidth="1.800">
              <path d="M25 1H1V17Q1 19 3 19H26.500Q29 19 29 17V4.500H25.500V17" />
              <path d="M5 8.500H12V15H5Z" />
              <path d="M4 4.500H22M15 8.500H22M15 12H22M15 15.500H22" strokeWidth="1.500" />
            </svg>
          </TrayItem>
          <TrayItem $w={32}>
            <svg width="17" height="10" fill="none" stroke={W} strokeWidth="1.300"><path d="M.7 9L8.500 1L16.300 9" /></svg>
          </TrayItem>
          <TrayItem $w={30}>
            <svg width="16" height="16" fill="none" stroke={W} strokeWidth="1.300">
              <path d="M1 15A14 14 0 0 1 15 1M5 15.500A10 10 0 0 1 15 5.500M9 15.500A6 6 0 0 1 15 9.500" opacity=".75" />
              <circle cx="13.500" cy="13.700" r="1.500" fill={W} stroke="none" />
            </svg>
          </TrayItem>
          <TrayItem $w={30}>
            <svg width="20" height="15" fill="none" stroke={W} strokeWidth="1.100">
              <path d="M5 3.500H18V13.500H4V10M18 6H19.500V11H18M1 0V3M4 0V3M0 3H5V6Q2.500 8 0 6ZM2.500 7V12" />
              <path d="M7 5.500H16.500V12H5.500V8Z" fill={W} stroke="none" />
            </svg>
          </TrayItem>
          <TrayItem $w={30}>
            <svg width="21" height="17" fill="none" stroke={W} strokeWidth="1.200">
              <path d="M.7 5.500H3.500L7 2V15L3.500 11.500H.7Z" />
              <path d="M10 6Q11.500 8.500 10 11M13 3.800Q16 8.500 13 13.200" />
              <path d="M16 1.500Q20.500 8.500 16 15.500" opacity=".4" />
            </svg>
          </TrayItem>
          <TrayItem $w={41}><Label $size={14} $color={W}>РУС</Label></TrayItem>
          <Clock>
            <Label $size={14} $color={W}>22:11</Label>
            <Label $size={14} $color={W}>22.09.2021</Label>
          </Clock>
          <TrayItem $w={44}>
            <svg width="20" height="21" fill="none" stroke={W} strokeWidth="1.200">
              <path d="M.6 1.600H19.400V16.500H12.500L10 19.500L7.500 16.500H.6Z" />
            </svg>
          </TrayItem>
          <ShowDesktop />
        </Tray>
      </Taskbar>
    </Screen>
  );
}
